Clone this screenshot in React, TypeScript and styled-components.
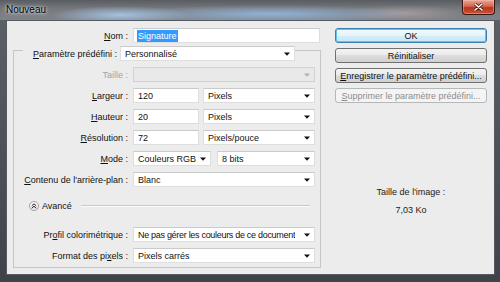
import React, { FC, ReactNode } from "react";
import styled, { createGlobalStyle, css } from "styled-components";

const GlobalStyle = createGlobalStyle`
  html, body {
    margin: 0;
    padding: 0;
  }
  body {
    width: 500px;
    height: 282px;
    overflow: hidden;
    font-family: "Liberation Sans", Arial, sans-serif;
    font-size: 9px;
    color: #111;
  }
`;

const Window = styled.div`
  width: 500px;
  height: 282px;
  display: flex;
  flex-direction: column;
  background: linear-gradient(#5d6168, #3f4349);
`;

const TitleBar = styled.div`
  flex: none;
  height: 20px;
  display: flex;
  justify-content: space-between;
  align-items: flex-start;
  padding-left: 6px;
  background:
    radial-gradient(70px 9px at 120px 15px, rgba(170, 205, 240, 0.85), transparent),
    radial-gradient(150px 9px at 270px 14px, rgba(150, 190, 232, 0.8), transparent),
    radial-gradient(60px 8px at 405px 13px, rgba(190, 170, 170, 0.6), transparent),
    linear-gradient(#595c60, #76797e 45%, #80848a);
`;

const Title = styled.span`
  line-height: 20px;
  font-size: 10px;
  color: #000;
  text-shadow: 0 0 4px rgba(255, 255, 255, 0.85), 0 0 2px rgba(255, 255, 255, 0.7);
`;

const CloseButton = styled.div`
  width: 33px;
  height: 15px;
  margin-right: 5px;
  box-sizing: border-box;
  display: flex;
  align-items: center;
  justify-content: center;
  border: 1px solid #3d1510;
  border-top: none;
  border-radius: 0 0 4px 4px;
  background: linear-gradient(#e9a898, #d26650 45%, #b9341c 55%, #cf5236);
  box-shadow: inset 0 0 0 1px rgba(255, 200, 190, 0.4);
`;

const Client = styled.div`
  flex: 1;
  margin: 0 5px 7px 6px;
  padding: 7px 0 0 6px;
  display: flex;
  gap: 14px;
  background: #ececec;
  border: 1px solid #555a61;
`;

const LeftColumn = styled.div`
  width: 308px;
  display: flex;
  flex-direction: column;
`;

const NameRow = styled.div`
  display: grid;
  grid-template-columns: 115px 187px;
  column-gap: 5px;
  align-items: center;
`;

const Label = styled.span<{ $disabled?: boolean }>`
  text-align: right;
  white-space: nowrap;
  color: ${(p) => (p.$disabled ? "#a3a3a3" : "#111")};
`;

const Key = styled.u`
  text-decoration: underline;
  text-underline-offset: 1px;
`;

const Box = styled.div<{ $disabled?: boolean }>`
  height: 15px;
  box-sizing: border-box;
  display: flex;
  align-items: center;
  justify-content: space-between;
  gap: 3px;
  padding: 0 4px 0 4px;
  white-space: nowrap;
  overflow: hidden;
  background: #fff;
  border: 1px solid #dedede;
  border-top-color: #cacaca;

  ${(p) =>
    p.$disabled &&
    css`
      background: #e9e9e9;
      border-color: #d2d2d2;
    `}
`;

const BoxText = styled.span<{ $tight?: boolean }>`
  min-width: 0;
  overflow: hidden;
  letter-spacing: ${(p) => (p.$tight ? "-0.3px" : "normal")};
`;

const Selected = styled.span`
  background: #3399ff;
  color: #fff;
  line-height: 12px;
  padding: 0 1px;
  margin-left: -1px;
`;

const Fieldset = styled.fieldset`
  margin: -3px 0 0 0;
  padding: 0 5px 4px 0;
  width: 308px;
  box-sizing: border-box;
  min-inline-size: 0;
  border: 1px solid #c6c6c6;
`;

const Legend = styled.legend`
  margin-left: 9px;
  padding: 6px 0 0 0;
`;

const PresetRow = styled.div`
  display: grid;
  grid-template-columns: 94px 175px;
  align-items: center;
  column-gap: 3px;
`;

const Rows = styled.div`
  display: grid;
  grid-template-columns: 114px 182px;
  column-gap: 5px;
  row-gap: 6px;
  margin-top: 6px;
  align-items: center;
`;

const Pair = styled.div<{ $first: number }>`
  display: grid;
  grid-template-columns: ${(p) => p.$first}px 1fr;
  column-gap: ${(p) => (p.$first > 70 ? 6 : 4)}px;
`;

const AdvancedRow = styled.div`
  grid-column: 1 / -1;
  height: 28px;
  padding: 0 0 3px 15px;
  box-sizing: border-box;
  display: flex;
  align-items: center;
  gap: 3px;
`;

const RoundIcon = styled.div`
  width: 10px;
  height: 10px;
  box-sizing: border-box;
  border-radius: 50%;
  border: 1px solid #a2a2a2;
  background: linear-gradient(#ffffff, #e4e4e4);
  display: flex;
  align-items: center;
  justify-content: center;
`;

const Rule = styled.div`
  flex: 1;
  margin: 0 5px 0 6px;
  border-top: 1px solid #c9c9c9;
  border-bottom: 1px solid #fbfbfb;
`;

const RightColumn = styled.div`
  width: 152px;
  display: flex;
  flex-direction: column;
  gap: 5px;
`;

const Button = styled.div<{ $variant?: "default" | "normal" | "disabled" }>`
  height: 15px;
  box-sizing: border-box;
  display: flex;
  align-items: center;
  justify-content: center;
  white-space: nowrap;
  border-radius: 3px;
  border: 1px solid #707070;
  background: linear-gradient(#f3f3f3, #ebebeb 50%, #dddddd 50%, #d0d0d0);
  color: #111;

  ${(p) =>
    p.$variant === "default" &&
    css`
      border-color: #3c7fb1;
      box-shadow: inset 0 0 0 1px #5fc4f0;
      background: linear-gradient(#f1f9fd, #e4f4fc 50%, #d4edfa 50%, #c9e7f7);
    `}

  ${(p) =>
    p.$variant === "disabled" &&
    css`
      border-color: #b4b8bb;
      background: #f4f4f4;
      color: #8d8d8d;
    `}
`;

const Info = styled.div`
  margin-top: 78px;
  display: flex;
  flex-direction: column;
  align-items: center;
  gap: 6px;
  line-height: 12px;
  color: #222;
`;

const Arrow: FC<{ disabled?: boolean }> = ({ disabled }) => (
  <svg width="6" height="4" viewBox="0 0 6 4" style={{ flex: "none" }}>
    <path d="M0 0.5 H6 L3 3.8 Z" fill={disabled ? "#b0b0b0" : "#111"} />
  </svg>
);

const Select: FC<{ children?: ReactNode; disabled?: boolean; tight?: boolean }> = ({
  children,
  disabled,
  tight,
}) => (
  <Box $disabled={disabled}>
    <BoxText $tight={tight}>{children}</BoxText>
    <Arrow disabled={disabled} />
  </Box>
);

const App: FC = () => {
  return (
    <>
      <GlobalStyle />
      <Window>
        <TitleBar>
          <Title>Nouveau</Title>
          <CloseButton>
            <svg width="9" height="8" viewBox="0 0 9 8">
              <path d="M1 1 L8 7 M8 1 L1 7" stroke="#5a1a10" strokeWidth="3" strokeLinecap="round" />
              <path d="M1 1 L8 7 M8 1 L1 7" stroke="#fff" strokeWidth="1.6" strokeLinecap="round" />
            </svg>
          </CloseButton>
        </TitleBar>
        <Client>
          <LeftColumn>
            <NameRow>
              <Label>
                <Key>N</Key>om :
              </Label>
              <Box>
                <Selected>Signature</Selected>
              </Box>
            </NameRow>
            <Fieldset>
              <Legend>
                <PresetRow>
                  <Label>
                    <Key>P</Key>aramètre prédéfini :
                  </Label>
                  <Select>Personnalisé</Select>
                </PresetRow>
              </Legend>
              <Rows>
                <Label $disabled>Taille :</Label>
                <Select disabled />

                <Label>
                  <Key>L</Key>argeur :
                </Label>
                <Pair $first={66}>
                  <Box>120</Box>
                  <Select>Pixels</Select>
                </Pair>

                <Label>
                  <Key>H</Key>auteur :
                </Label>
                <Pair $first={66}>
                  <Box>20</Box>
                  <Select>Pixels</Select>
                </Pair>

                <Label>
                  <Key>R</Key>ésolution :
                </Label>
                <Pair $first={66}>
                  <Box>72</Box>
                  <Select>Pixels/pouce</Select>
                </Pair>

                <Label>
                  <Key>M</Key>ode :
                </Label>
                <Pair $first={78}>
                  <Select>Couleurs RGB</Select>
                  <Select>8 bits</Select>
                </Pair>

                <Label>
                  <Key>C</Key>ontenu de l'arrière-plan :
                </Label>
                <Select>Blanc</Select>

                <AdvancedRow>
                  <RoundIcon>
                    <svg width="6" height="6" viewBox="0 0 6 6">
                      <path d="M0.8 2.8 L3 0.8 L5.2 2.8 M0.8 5.2 L3 3.2 L5.2 5.2" stroke="#222" strokeWidth="1" fill="none" />
                    </svg>
                  </RoundIcon>
                  <span>Avancé</span>
                  <Rule />
                </AdvancedRow>

                <Label>
                  Pr<Key>o</Key>fil colorimétrique :
                </Label>
                <Select tight>Ne pas gérer les couleurs de ce document</Select>

                <Label>
                  Format des pi<Key>x</Key>els :
                </Label>
                <Select>Pixels carrés</Select>
              </Rows>
            </Fieldset>
          </LeftColumn>
          <RightColumn>
            <Button $variant="default">OK</Button>
            <Button>Réinitialiser</Button>
            <Button>
              <span>
                <Key>E</Key>nregistrer le paramètre prédéfini...
              </span>
            </Button>
            <Button $variant="disabled">
              <span>
                <Key>S</Key>upprimer le paramètre prédéfini...
              </span>
            </Button>
            <Info>
              <span>Taille de l'image :</span>
              <span>7,03 Ko</span>
            </Info>
          </RightColumn>
        </Client>
      </Window>
    </>
  );
};

export default App;
